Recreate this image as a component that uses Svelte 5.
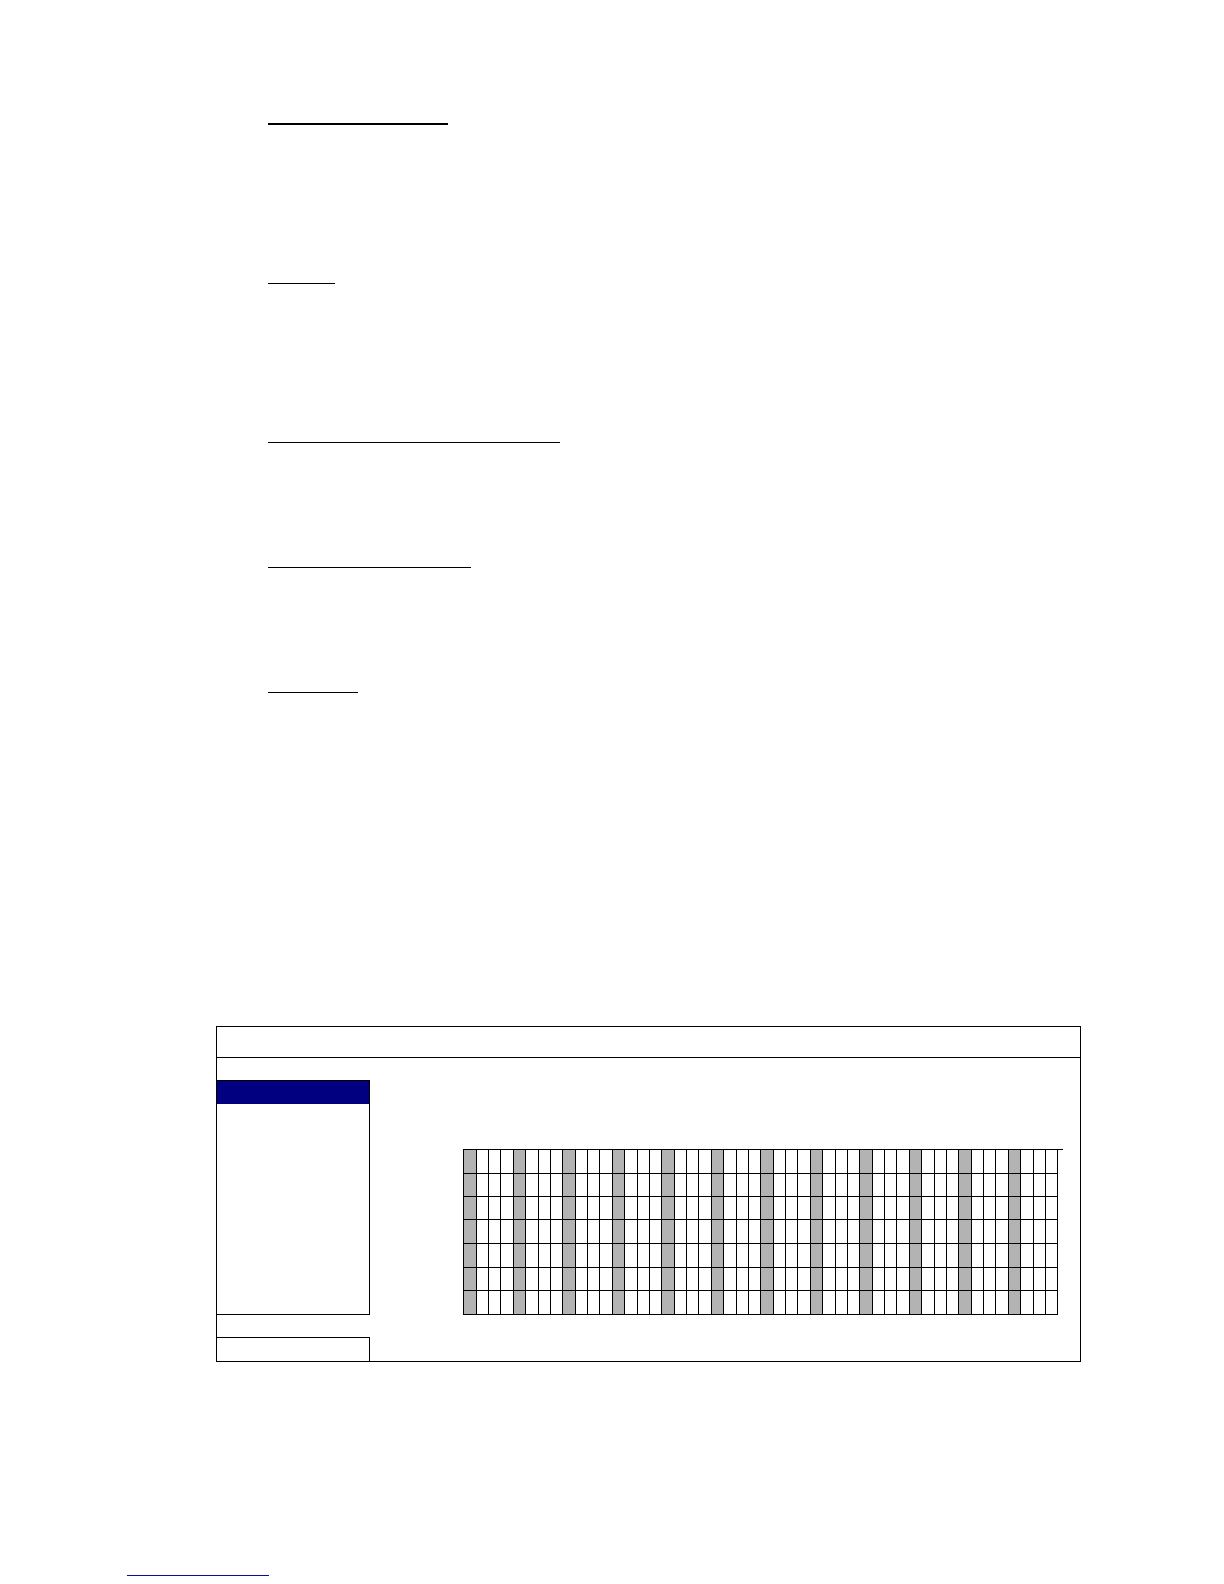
<script lang="ts">
  const rules = [
    { width: 180, space: 160, bold: true },
    { width: 67, space: 159, bold: false },
    { width: 292, space: 125, bold: false },
    { width: 203, space: 125, bold: false },
    { width: 90, space: 334, bold: false },
  ];

  // 48 slots, shaded at the start of every group of four
  const slots = Array.from({ length: 48 }, (_, i) => i);
  const slotWidths = [13, 12, 12, 13, 12, 13, 12, 12];
  const rowHeights = [24, 23, 23, 24, 24, 23, 24];
</script>

<main>
  <div class="rules">
    {#each rules as rule}
      <div class="section" style="height: {rule.space}px">
        <div class="rule" class:bold={rule.bold} style="width: {rule.width}px"></div>
      </div>
    {/each}
  </div>

  <section class="window">
    <header></header>
    <div class="body">
      <aside>
        <div class="menu">
          <div class="selected"></div>
        </div>
        <div class="status"></div>
      </aside>
      <div class="schedule">
        <div class="axis">
          <table>
            <colgroup>
              {#each slots as slot}
                <col style="width: {slotWidths[slot % 8]}px" />
              {/each}
            </colgroup>
            <tbody>
              {#each rowHeights as height}
                <tr style="height: {height}px">
                  {#each slots as slot}
                    <td class:shaded={slot % 4 === 0}></td>
                  {/each}
                </tr>
              {/each}
            </tbody>
          </table>
        </div>
      </div>
    </div>
  </section>

  <footer>
    <a href="#top" aria-label="Back to top"></a>
  </footer>
</main>

<style>
  :global(body) {
    margin: 0;
    background: #fff;
    font-family: "Liberation Sans", Arial, sans-serif;
  }
  main,
  main * {
    box-sizing: border-box;
  }
  main {
    padding: 123px 143px 8px 127px;
  }
  .rules {
    padding-left: 141px;
  }
  .rule {
    height: 1px;
    background: #000;
  }
  .rule.bold {
    height: 2px;
  }
  .window {
    margin-left: 89px;
    border: 1px solid #000;
  }
  header {
    height: 31px;
    border-bottom: 1px solid #000;
  }
  .body {
    display: flex;
    padding-top: 22px;
  }
  aside {
    flex: none;
    width: 153px;
  }
  .menu {
    height: 235px;
    border: 1px solid #000;
    border-left: none;
  }
  .selected {
    height: 23px;
    background: #000080;
  }
  .status {
    height: 24px;
    margin-top: 22px;
    border-top: 1px solid #000;
    border-right: 1px solid #000;
  }
  .schedule {
    flex: 1;
    padding: 69px 17px 46px 93px;
  }
  .axis {
    border-top: 1px solid #000;
  }
  table {
    width: 595px;
    table-layout: fixed;
    border-collapse: separate;
    border-spacing: 0;
    border-left: 1px solid #000;
  }
  td {
    padding: 0;
    border-right: 1px solid #000;
    border-bottom: 1px solid #000;
  }
  .shaded {
    background: #b3b3b3;
  }
  footer {
    padding-top: 213px;
  }
  footer a {
    display: block;
    width: 142px;
    height: 1px;
    background: #0c0c98;
  }
</style>
